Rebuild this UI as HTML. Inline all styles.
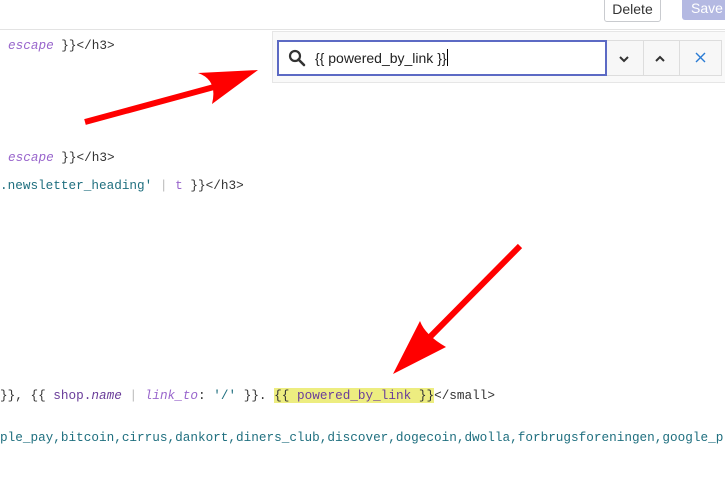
<!DOCTYPE html>
<html><head><style>
body{margin:0;width:725px;height:497px;background:#fff;position:relative;overflow:hidden;font-family:"Liberation Sans",sans-serif}
.code{position:absolute;left:0;font-family:"Liberation Mono",monospace;font-size:12.7px;color:#333;white-space:pre}
.p{color:#9966cc;font-style:italic}
.t{color:#1f6f7f}
.n{color:#6a3d9a}
.hl{background:#eded80}
.btn{position:absolute;top:-4px;height:24px;border-radius:3px;font-size:14px;line-height:24px;text-align:center}
</style></head><body>
<div style="position:absolute;left:0;top:29px;width:725px;height:1px;background:#e3e3e3"></div>
<div class="btn" style="left:604px;width:55px;border:1px solid #c9cbcf;color:#333;background:#fff">Delete</div>
<div class="btn" style="left:682px;width:50px;background:#b4b9e2;color:#fff">Save</div>

<div class="code" style="top:38px;left:8px"><span class="p">escape</span> }}&lt;/h3&gt;</div>
<div class="code" style="top:150px;left:8px"><span class="p">escape</span> }}&lt;/h3&gt;</div>
<div class="code" style="top:178px"><span class="t">.newsletter_heading'</span> <span style="color:#bbb">|</span> <span class="p" style="font-style:normal">t</span> }}&lt;/h3&gt;</div>
<div class="code" style="top:388px">}}, {{ <span class="n">shop.<i>name</i></span> <span style="color:#bbb">|</span> <span class="p">link_to</span>: <span class="t">'/'</span> }}. <span class="hl">{{ <span class="n">powered_by_link</span> }}</span>&lt;/small&gt;</div>
<div class="code t" style="top:430px">ple_pay,bitcoin,cirrus,dankort,diners_club,discover,dogecoin,dwolla,forbrugsforeningen,google_p</div>

<div style="position:absolute;left:272px;top:31px;width:460px;height:52px;background:#f9f9f9;border:1px solid #e6e6e6;box-sizing:border-box"></div>
<div style="position:absolute;left:277px;top:40px;width:330px;height:36px;box-sizing:border-box;border:2px solid #5c6ac4;background:#fff"></div>
<svg style="position:absolute;left:288px;top:49px" width="18" height="18" viewBox="0 0 18 18"><circle cx="7" cy="7" r="5" fill="none" stroke="#333" stroke-width="2.2"/><path d="M10.5 10.5L16 16" stroke="#333" stroke-width="2.6" stroke-linecap="round"/></svg>
<div style="position:absolute;left:315px;top:49px;font-size:14px;color:#222">{{ powered_by_link }}<span style="display:inline-block;width:1px;height:17px;background:#000;vertical-align:-3px"></span></div>
<div style="position:absolute;left:607px;top:40px;width:115px;height:36px;box-sizing:border-box;border:1px solid #ddd;border-left:none;background:#f7f7f7"></div>
<div style="position:absolute;left:643px;top:40px;width:1px;height:36px;background:#ddd"></div>
<div style="position:absolute;left:679px;top:40px;width:1px;height:36px;background:#ddd"></div>
<svg style="position:absolute;left:607px;top:40px" width="115" height="36"><path d="M13 17l4 4 4-4" fill="none" stroke="#333" stroke-width="2"/><path d="M49 21l4-4 4 4" fill="none" stroke="#333" stroke-width="2"/><path d="M89 13l9 9M98 13l-9 9" stroke="#2a7bd4" stroke-width="1.4"/></svg>

<svg style="position:absolute;left:0;top:0" width="725" height="497">
<path d="M85 122L225 84" stroke="#f00" stroke-width="6"/>
<path d="M258 70L198 73Q218 80 212 104Z" fill="#f00"/>
<path d="M520 246L425 342" stroke="#f00" stroke-width="6"/>
<path d="M393 374L420 321Q425 335 446 347Z" fill="#f00"/>
</svg>
</body></html>
